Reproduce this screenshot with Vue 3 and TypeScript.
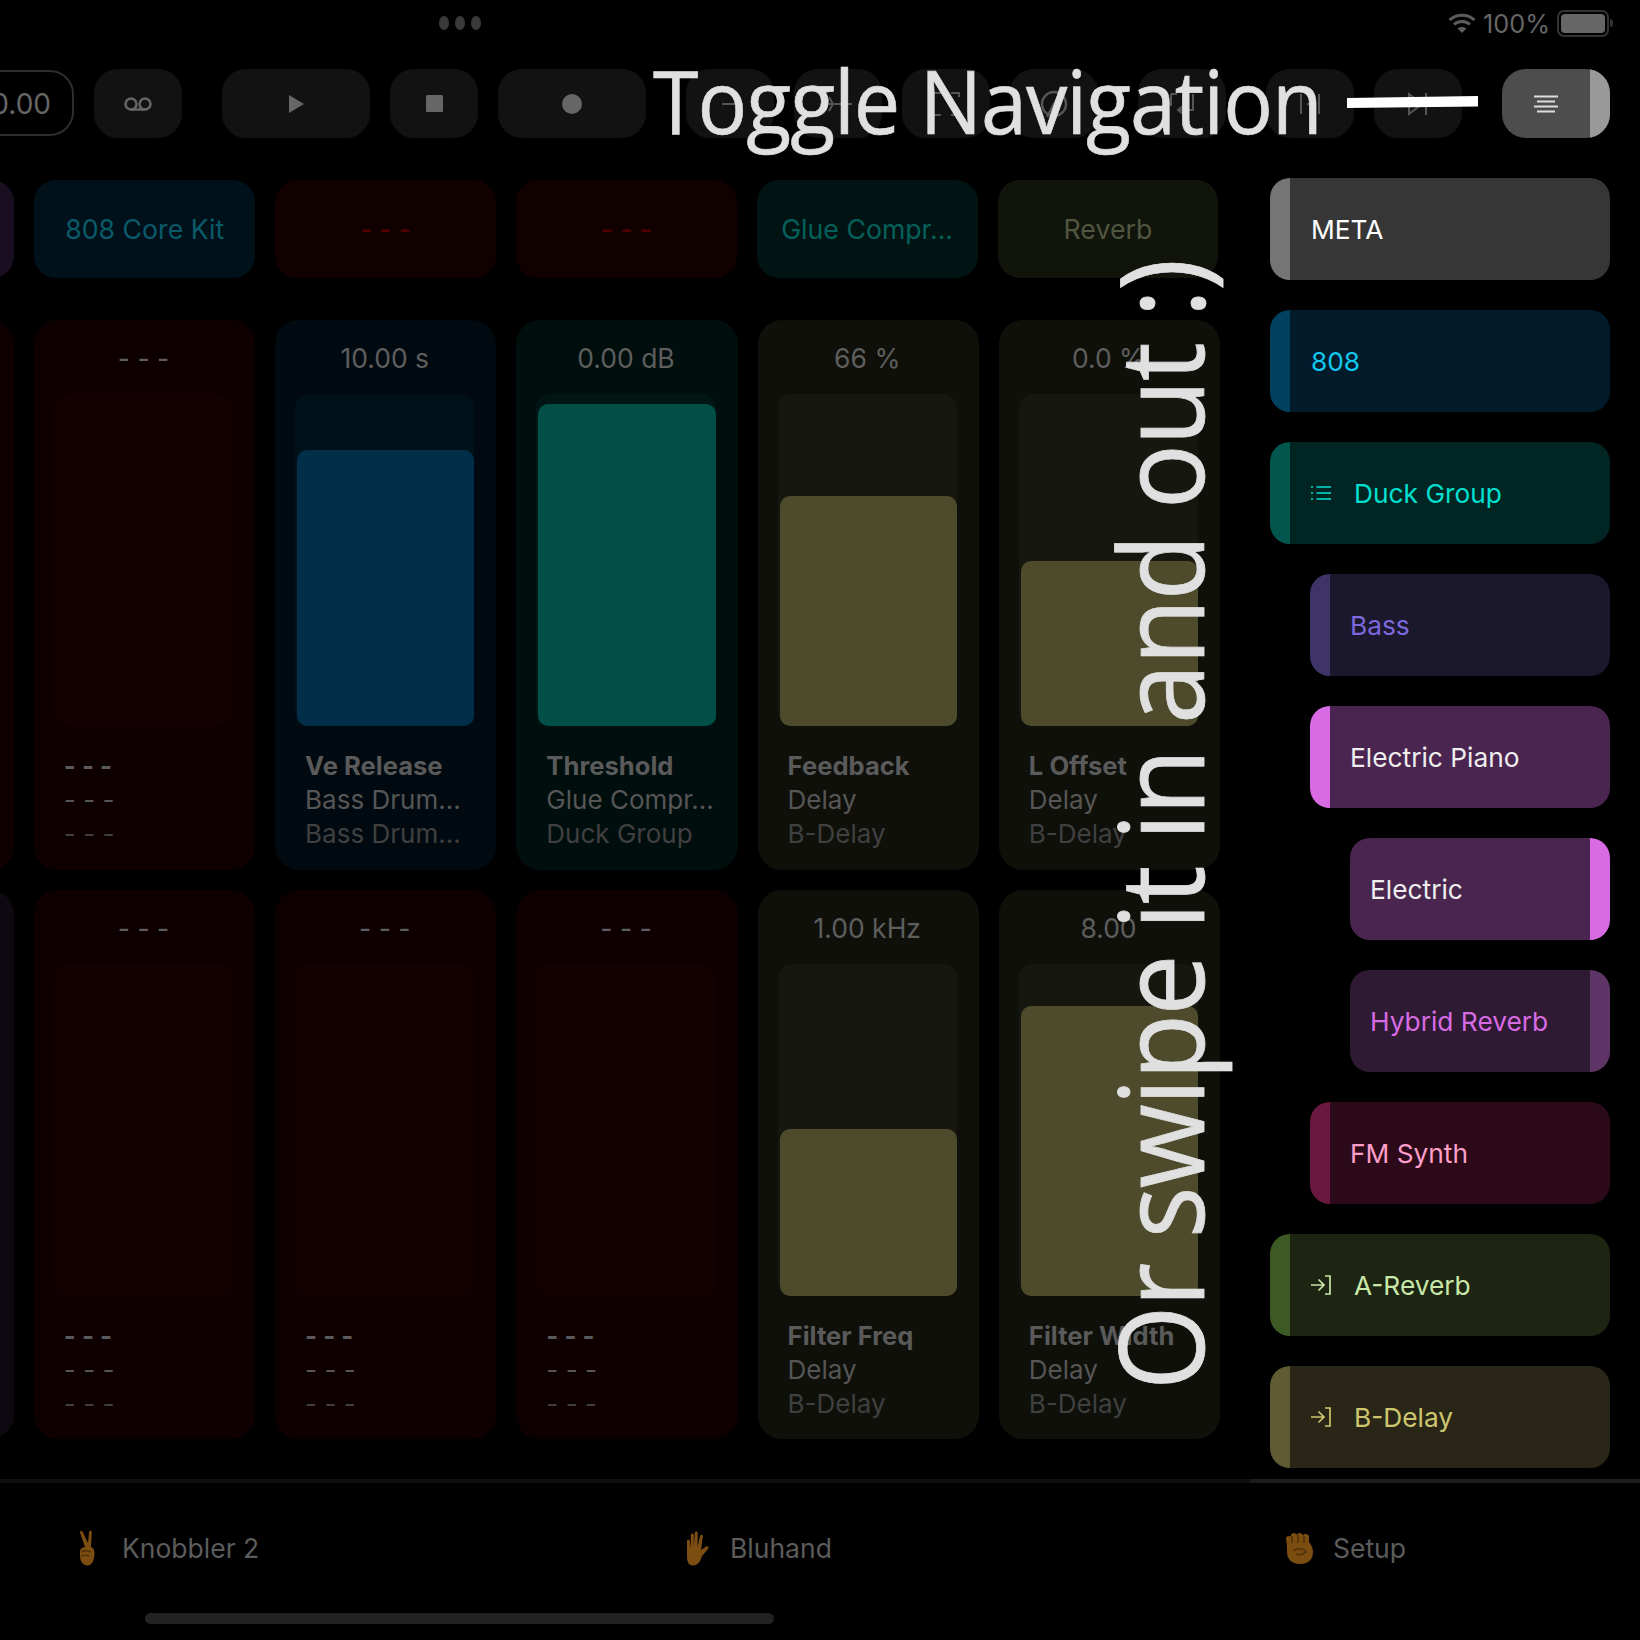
<script setup lang="ts">
interface Strip {
  tone: string
  value: string
  fill: number
  name: string
  device: string
  track: string
}

const headers = [
  { tone: 'purple', text: '' },
  { tone: 'blue', text: '808 Core Kit' },
  { tone: 'red', text: '- - -' },
  { tone: 'red', text: '- - -' },
  { tone: 'teal', text: 'Glue Compr...' },
  { tone: 'olive', text: 'Reverb' },
]

const blank = (tone = 'red'): Strip => ({ tone, value: '- - -', fill: 0, name: '- - -', device: '- - -', track: '- - -' })

const rows: Strip[][] = [
  [
    blank(),
    blank(),
    { tone: 'blue', value: '10.00 s', fill: 276, name: 'Ve Release', device: 'Bass Drum...', track: 'Bass Drum...' },
    { tone: 'teal', value: '0.00 dB', fill: 322, name: 'Threshold', device: 'Glue Compr...', track: 'Duck Group' },
    { tone: 'yellow', value: '66 %', fill: 230, name: 'Feedback', device: 'Delay', track: 'B-Delay' },
    { tone: 'yellow', value: '0.0 %', fill: 165, name: 'L Offset', device: 'Delay', track: 'B-Delay' },
  ],
  [
    blank('plum'),
    blank(),
    blank(),
    blank(),
    { tone: 'yellow', value: '1.00 kHz', fill: 167, name: 'Filter Freq', device: 'Delay', track: 'B-Delay' },
    { tone: 'yellow', value: '8.00', fill: 290, name: 'Filter Width', device: 'Delay', track: 'B-Delay' },
  ],
]

const tracks = [
  { name: 'META', cls: 'meta', indent: 0, icon: '' },
  { name: '808', cls: 'k808', indent: 0, icon: '' },
  { name: 'Duck Group', cls: 'duck', indent: 0, icon: 'list' },
  { name: 'Bass', cls: 'bass', indent: 1, icon: '' },
  { name: 'Electric Piano', cls: 'piano', indent: 1, icon: '' },
  { name: 'Electric', cls: 'electric', indent: 2, icon: '' },
  { name: 'Hybrid Reverb', cls: 'hybrid', indent: 2, icon: '' },
  { name: 'FM Synth', cls: 'fm', indent: 1, icon: '' },
  { name: 'A-Reverb', cls: 'areverb', indent: 0, icon: 'in' },
  { name: 'B-Delay', cls: 'bdelay', indent: 0, icon: 'in' },
]
</script>

<template>
  <div class="screen">
    <header class="status">
      <div class="dots"><i></i><i></i><i></i></div>
      <div class="sys">
        <svg class="wifi" width="28" height="20" viewBox="0 0 28 20" fill="none" stroke="#5c5c5c" stroke-width="3">
          <path d="M1.5 7 C8.5 0.5 19.5 0.5 26.5 7" />
          <path d="M6 11.5 C10.5 7.5 17.5 7.5 22 11.5" />
          <path d="M14 20 L9.5 15.5 C12 13.5 16 13.5 18.5 15.5 Z" fill="#5c5c5c" stroke="none" />
        </svg>
        <span>100%</span>
        <div class="battery"><b></b></div>
        <em class="nub"></em>
      </div>
    </header>

    <nav class="toolbar">
      <div class="time">120.00</div>
      <button class="btn">
        <svg width="28" height="14" viewBox="0 0 28 14" fill="none" stroke="#666" stroke-width="2.5">
          <circle cx="7" cy="7" r="5.5" /><circle cx="21" cy="7" r="5.5" /><path d="M7 12.5h14" />
        </svg>
      </button>
      <button class="btn wide sep">
        <svg width="15" height="18" viewBox="0 0 15 18"><path d="M0 0l15 9L0 18z" fill="#666" /></svg>
      </button>
      <button class="btn">
        <svg width="17" height="17" viewBox="0 0 17 17"><rect width="17" height="17" rx="1.5" fill="#666" /></svg>
      </button>
      <button class="btn wide">
        <svg width="20" height="20" viewBox="0 0 20 20"><circle cx="10" cy="10" r="10" fill="#666" /></svg>
      </button>
      <button class="btn sep">
        <svg width="26" height="22" viewBox="0 0 26 22" fill="none" stroke="#555" stroke-width="2"><path d="M5 11h16" /></svg>
      </button>
      <button class="btn">
        <svg width="34" height="24" viewBox="0 0 34 24" fill="none" stroke="#555" stroke-width="2">
          <path d="M13 12h18M4 12h8M8 5l4 7-4 7" />
        </svg>
      </button>
      <button class="btn">
        <svg width="30" height="26" viewBox="0 0 30 26" fill="none" stroke="#555" stroke-width="2">
          <path d="M2 6V2h8M20 2h8v4M2 20v4h8M20 24h8v-4" />
        </svg>
      </button>
      <button class="btn">
        <svg width="30" height="30" viewBox="0 0 30 30" fill="none" stroke="#555" stroke-width="2.5">
          <circle cx="15" cy="15" r="12" /><path d="M22 2L8 28" />
        </svg>
      </button>
      <button class="btn sep">
        <svg width="30" height="24" viewBox="0 0 30 24" fill="none" stroke="#555" stroke-width="2">
          <path d="M4 2v12M26 2v16H12M16 14l-5 4 5 4M4 2h6" />
        </svg>
      </button>
      <button class="btn sep">
        <svg width="22" height="22" viewBox="0 0 22 22" fill="none" stroke="#555" stroke-width="2">
          <path d="M2 1v20M20 1v20M16 6l-7 5 7 5" />
        </svg>
      </button>
      <button class="btn">
        <svg width="22" height="24" viewBox="0 0 22 24" fill="none" stroke="#555" stroke-width="2">
          <path d="M2 2l13 10L2 22zM19 1v22" />
        </svg>
      </button>
      <button class="btn toggle sep">
        <span class="burger">
          <svg width="24" height="18" viewBox="0 0 24 18" stroke="#ddd" stroke-width="2.2">
            <path d="M0 1.5h24M3 6.5h18M0 11.5h24M3 16.5h18" />
          </svg>
        </span>
        <span class="bar"></span>
      </button>
    </nav>

    <main class="main">
      <section class="grid">
        <div class="heads">
          <div v-for="(h, i) in headers" :key="i" class="head" :class="h.tone">{{ h.text }}</div>
        </div>
        <div v-for="(row, r) in rows" :key="r" class="row">
          <article v-for="(s, c) in row" :key="c" class="strip" :class="s.tone">
            <div class="value">{{ s.value }}</div>
            <div class="fader">
              <div v-if="s.fill" class="fill" :style="{ height: s.fill + 'px' }"></div>
            </div>
            <div class="l1">{{ s.name }}</div>
            <div class="l2">{{ s.device }}</div>
            <div class="l3">{{ s.track }}</div>
          </article>
        </div>
      </section>

      <aside class="side">
        <div
          v-for="t in tracks"
          :key="t.name"
          class="track"
          :class="[t.cls, 'indent' + t.indent]"
        >
          <svg v-if="t.icon === 'list'" class="ticon" width="20" height="16" viewBox="0 0 20 16" fill="none" stroke="currentColor" stroke-width="1.7">
            <path d="M5.5 2h14.5M5.5 8h14.5M5.5 14h14.5M0 2h2M0 8h2M0 14h2" />
          </svg>
          <svg v-if="t.icon === 'in'" class="ticon" width="20" height="20" viewBox="0 0 20 20" fill="none" stroke="currentColor" stroke-width="1.7">
            <path d="M0 10h12M7.500 4.500L13 10l-5.500 5.500M14 1h5v18h-5" />
          </svg>
          <span>{{ t.name }}</span>
        </div>
      </aside>
    </main>

    <footer class="tabs">
      <div class="tab">
        <svg width="32" height="36" viewBox="0 0 32 36">
          <path d="M13 17L8 2.500c-.4-1.600 2-2.300 2.700-.7L16 13l1-11c.2-1.800 2.800-1.600 2.800.2L19 17c2.500 1 3.500 3 3.500 6 0 7-2.500 12.500-7 12.500S8 31 8 26v-5c0-2 2-3.500 5-4z" fill="#7c4d10" />
          <path d="M9 22c3-1.500 7-1.500 10 0M9 26c3-1 6-1 8 0" stroke="#4e2f08" stroke-width="1.400" fill="none" />
        </svg>
        <span>Knobbler 2</span>
      </div>
      <div class="tab">
        <svg width="32" height="36" viewBox="0 0 32 36">
          <path d="M7 11c0-1.800 2.600-1.800 2.800 0l1 7V5c0-2 3-2 3 0v12l1-14c.2-2 3-1.800 3 .2L17.500 17 20 6c.5-2 3-1.500 2.800.5L21 20l5-3.500c1.800-1.200 3.500.8 2 2.500l-6 7c-1.500 5-4 9.500-9 9.500-4.500 0-6-4-6-9z" fill="#7c4d10" />
        </svg>
        <span>Bluhand</span>
      </div>
      <div class="tab">
        <svg width="32" height="36" viewBox="0 0 32 36">
          <path d="M3 9c0-2 1-3 2.500-3S8 7 8 5.500 9.500 3 11 3s2.500 1 3 2c.5-1.400 1.700-2 3-2s2.500 1 3 2.400C20.500 4.400 21.500 4 23 4c1.800 0 3 1.400 3 3v5l2 3c1 2 2 4 2 7 0 8-5 12-13 12-8.500 0-13-5-13-12 0-4 0-8-1-13z" fill="#7c4d10" />
          <path d="M9 6v7M15 5v8M21 6v7M10 21c4-3 11-3 13 1-3 3-7 3-10 2" stroke="#4e2f08" stroke-width="1.500" fill="none" />
        </svg>
        <span>Setup</span>
      </div>
    </footer>
    <div class="home"></div>

    <div class="hint-nav">Toggle Navigation</div>
    <svg class="hint-line" width="132" height="12" viewBox="0 0 132 12"><path d="M0 2L131 0v10.500L0 12z" fill="#fff" /></svg>
    <div class="hint-swipe">Or swipe it in and out :)</div>
  </div>
</template>

<style>
html, body { margin: 0; background: #000; }
</style>

<style scoped>
.screen {
  position: relative;
  width: 1640px;
  height: 1640px;
  overflow: hidden;
  background: #000;
  display: flex;
  flex-direction: column;
  font-family: Inter, "Noto Sans", sans-serif;
  color: #666;
}

/* status */
.status { height: 46px; display: flex; align-items: center; justify-content: space-between; padding: 0 27px 0 439px; }
.dots { display: flex; gap: 6px; }
.dots i { width: 10px; height: 14px; border-radius: 50%; background: #3a3a3a; }
.sys { display: flex; align-items: center; font-size: 25.300px; color: #666; }
.wifi { margin-right: 7px; }
.battery { margin-left: 7px; width: 44px; height: 19px; padding: 2px; border: 2px solid #333; border-radius: 7px; }
.battery b { display: block; height: 100%; background: #666; border-radius: 4px; }
.nub { margin-left: 1px; width: 3px; height: 8px; background: #333; border-radius: 0 3px 3px 0; }

/* toolbar */
.toolbar { margin-top: 23px; height: 69px; padding-right: 30px; display: flex; justify-content: flex-end; align-items: center; gap: 20px; }
.time { flex: none; align-self: flex-start; margin-top: 1px; box-sizing: border-box; height: 66px; padding: 2px 21px 0 23px; display: flex; align-items: center; border: 2px solid #2e2e2e; border-radius: 24px; font-size: 28px; color: #666; }
.btn { flex: none; width: 88px; height: 69px; padding: 0; display: flex; align-items: center; justify-content: center; border: 0; border-radius: 24px; background: #121212; overflow: hidden; }
.btn.wide { width: 148px; }
.btn.sep { margin-left: 20px; }
.toggle { width: 108px; background: #4d4d4d; }
.burger { flex: 1; display: flex; justify-content: center; }
.bar { width: 20px; height: 100%; background: #999; }

/* layout */
.main { margin-top: 40px; height: 1305px; display: flex; flex: none; }
.grid { box-sizing: border-box; width: 1250px; border-bottom: 4px solid #0e0e0e; padding-top: 2px; display: flex; flex-direction: column; overflow: hidden; }
.side { box-sizing: border-box; width: 390px; border-bottom: 4px solid #1c1c1c; padding: 0 30px 0 20px; display: flex; flex-direction: column; gap: 30px; }

.heads { display: flex; justify-content: flex-end; gap: 20px; padding-right: 31.700px; margin-bottom: 42px; }
.head { flex: none; width: 220.800px; height: 98px; border-radius: 22px; display: flex; align-items: center; justify-content: center; font-size: 26.700px; }
.row { display: flex; justify-content: flex-end; gap: 20px; padding-right: 29.900px; margin-bottom: 20px; }
.strip { flex: none; box-sizing: border-box; width: 221.250px; height: 550px; padding: 0 22px 0 20px; border-radius: 24px; }
.row + .row .strip { height: 549px; }

.head.purple { background: #1a0f20; }
.head.blue { background: #01111a; color: #0a5a6a; }
.head.red { background: #100000; color: #500000; font-weight: 500; }
.head.teal { background: #011413; color: #05605c; }
.head.olive { background: #10140b; color: #50563f; }

.strip.red { background: #0e0000; --track: #130000; --fill: #130000; }
.strip.plum { background: #0e0810; --track: #140a16; --fill: #140a16; }
.strip.blue { background: #010a10; --track: #011119; --fill: #012f4a; }
.strip.teal { background: #000e0d; --track: #011514; --fill: #024f47; }
.strip.yellow { background: #0f100a; --track: #16170f; --fill: #4d4b2b; }

.value { height: 74px; line-height: 76px; text-align: center; font-size: 26.500px; color: #5e5e5e; }
.fader { height: 332px; margin-bottom: 23px; padding-left: 2px; border-radius: 14px; background: var(--track); display: flex; align-items: flex-end; }
.fill { flex: 1; border-radius: 10px; background: var(--fill); }
.l1, .l2, .l3 { padding-left: 10px; height: 34px; line-height: 34px; font-size: 26px; white-space: nowrap; }
.l1 { font-size: 25.600px; font-weight: 700; color: #5a5a5a; }
.l2 { color: #565656; }
.l3 { color: #404040; }

/* sidebar */
.track { flex: none; box-sizing: border-box; height: 102px; display: flex; align-items: center; gap: 23px; padding-left: 41px; border-radius: 20px; background: linear-gradient(90deg, var(--accent) 20px, var(--bg) 20px); color: var(--fg); font-size: 26.300px; }
.indent1 { margin-left: 40px; padding-left: 40px; }
.indent2 { margin-left: 80px; padding-left: 20px; background: linear-gradient(270deg, var(--accent) 20px, var(--bg) 20px); }
.ticon { flex: none; }
.meta { --bg: #363636; --accent: #757575; --fg: #fff; }
.k808 { --bg: #011b2a; --accent: #02405f; --fg: #12c8f0; }
.duck { --bg: #012523; --accent: #01574e; --fg: #00e0d0; }
.bass { --bg: #1b182e; --accent: #3f3468; --fg: #7b68dc; }
.piano { --bg: #4a2550; --accent: #d86ae4; --fg: #eee; }
.electric { --bg: #4a2550; --accent: #d86ae4; --fg: #eee; }
.hybrid { --bg: #2e1a33; --accent: #5f3568; --fg: #d86ae4; }
.fm { --bg: #2c0a1a; --accent: #6b1840; --fg: #ff9ec8; }
.areverb { --bg: #1d2412; --accent: #3e5a24; --fg: #c9e8a8; }
.bdelay { --bg: #2a2617; --accent: #5f5b33; --fg: #cdc66e; }

/* tabs */
.tabs { height: 130px; padding-left: 72px; display: grid; grid-template-columns: 608px 603px auto; align-items: center; font-size: 26.500px; color: #5c5c5c; }
.tab { display: flex; align-items: center; gap: 18px; }
.home { width: 629px; height: 11px; margin-left: 145px; border-radius: 6px; background: #222; }

/* coach marks */
.hint-nav { position: absolute; left: 653px; top: 40px; transform-origin: 0 50%; transform: scaleX(0.94); font-family: "Open Sans", sans-serif; font-size: 88px; line-height: 120px; color: #e0e0e0; letter-spacing: -1.100px; white-space: nowrap; -webkit-text-stroke: 0.6px #e0e0e0; }
.hint-line { position: absolute; left: 1347px; top: 96px; }
.hint-swipe { position: absolute; left: 1218px; top: 1272px; transform-origin: 0 100%; transform: rotate(-90deg) scaleX(0.92); font-family: "Open Sans", sans-serif; font-size: 118px; line-height: 1; letter-spacing: -1.900px; color: #e0e0e0; white-space: nowrap; -webkit-text-stroke: 0.8px #e0e0e0; }
</style>
